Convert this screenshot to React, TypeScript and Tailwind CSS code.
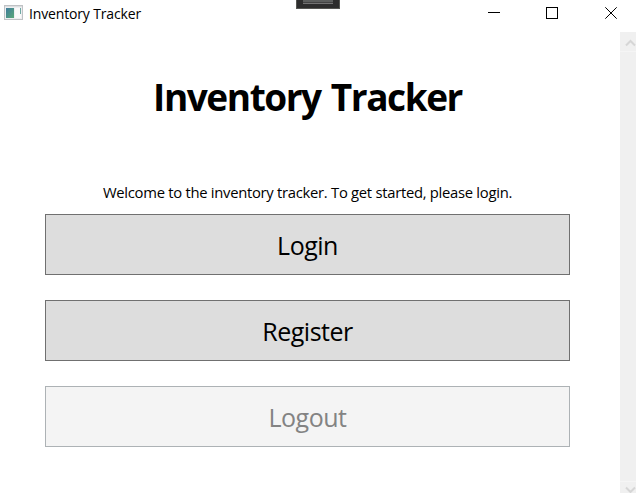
import type { ReactNode } from "react";

function AppIcon() {
  return (
    <svg width="19" height="16" viewBox="0 0 19 16" shapeRendering="crispEdges">
      <defs>
        <linearGradient id="pane" x1="0" y1="0" x2="1" y2="1">
          <stop offset="0" stopColor="#3f7c9c" />
          <stop offset="1" stopColor="#5aa878" />
        </linearGradient>
      </defs>
      <rect x="0.5" y="0.5" width="18" height="14" fill="#eeeff1" stroke="#c0c2c5" />
      <rect x="1" y="1" width="17" height="1" fill="#dcdee0" />
      <rect x="2" y="3" width="8" height="10" fill="url(#pane)" />
      <rect x="11" y="3" width="6" height="10" fill="#fafafa" />
      <rect x="16" y="3" width="1" height="6" fill="#6fa9a4" />
    </svg>
  );
}

function TitleBar() {
  return (
    <header className="flex h-8 shrink-0 items-start bg-white">
      <div className="flex flex-1 items-start pl-1">
        <div className="mt-[5px]">
          <AppIcon />
        </div>
        <span className="ml-[6px] mt-[4px] text-[14px] leading-5 tracking-[-0.15px] whitespace-nowrap">
          Inventory Tracker
        </span>
      </div>
      <div className="h-[9px] w-11 border border-t-0 border-[#555652] bg-[#2d2d2d] px-[6px]">
        <div className="h-[4px] border-b border-[#737373] bg-[#5c5e5d]">
          <div className="h-[3px] border-b border-[#434343]" />
        </div>
      </div>
      <div className="flex h-8 w-[296px] pl-[125px]">
        <svg width="171" height="32" viewBox="465 0 171 32" fill="none" stroke="#000">
          <path d="M488 12.5h12" />
          <rect x="546.5" y="7.5" width="11" height="11" />
          <path d="M605.3 7.3l11.4 11.4M616.7 7.3L605.3 18.7" />
        </svg>
      </div>
    </header>
  );
}

function ActionButton({ children, disabled = false }: { children: ReactNode; disabled?: boolean }) {
  return (
    <button
      disabled={disabled}
      className="flex h-[61px] w-full items-center justify-center border border-[#707070] bg-[#dddddd] pt-[1px] text-[25px] leading-8 tracking-[-0.5px] text-black disabled:border-[#adb2b5] disabled:bg-[#f4f4f4] disabled:text-[#838383]"
    >
      {children}
    </button>
  );
}

function ScrollBar() {
  return (
    <aside className="flex w-4 shrink-0 flex-col justify-between overflow-hidden bg-[#f0f0f0]">
      <svg width="16" height="20" fill="none" stroke="#d6d6d6" strokeWidth="2">
        <path d="M6 13.5l4.5-4.5 4.5 4.5" />
        <path d="M0 19.5h16" stroke="#f5f5f5" strokeWidth="1" />
      </svg>
      <svg width="16" height="13" fill="none" stroke="#d6d6d6" strokeWidth="2">
        <path d="M0 1.5h16" stroke="#f5f5f5" strokeWidth="1" />
        <path d="M6 7.5l4.5 4.5 4.5-4.5" />
      </svg>
    </aside>
  );
}

export default function App() {
  return (
    <div className="flex h-[493px] w-[636px] flex-col overflow-hidden bg-white font-['Open_Sans','Noto_Sans',sans-serif] text-black">
      <TitleBar />
      <div className="flex min-h-0 flex-1">
        <main className="flex flex-1 flex-col pl-[45px] pr-[50px] text-center">
          <h1 className="mt-[40px] text-[37px] leading-[50px] font-bold tracking-[-1.45px] [word-spacing:2px] whitespace-nowrap">
            Inventory Tracker
          </h1>
          <p className="mt-[59px] text-[14.8px] leading-[22px] tracking-[-0.28px] whitespace-nowrap">
            Welcome to the inventory tracker. To get started, please login.
          </p>
          <div className="mt-[11px] flex flex-col gap-[25px]">
            <ActionButton>Login</ActionButton>
            <ActionButton>Register</ActionButton>
            <ActionButton disabled>Logout</ActionButton>
          </div>
        </main>
        <ScrollBar />
      </div>
    </div>
  );
}
